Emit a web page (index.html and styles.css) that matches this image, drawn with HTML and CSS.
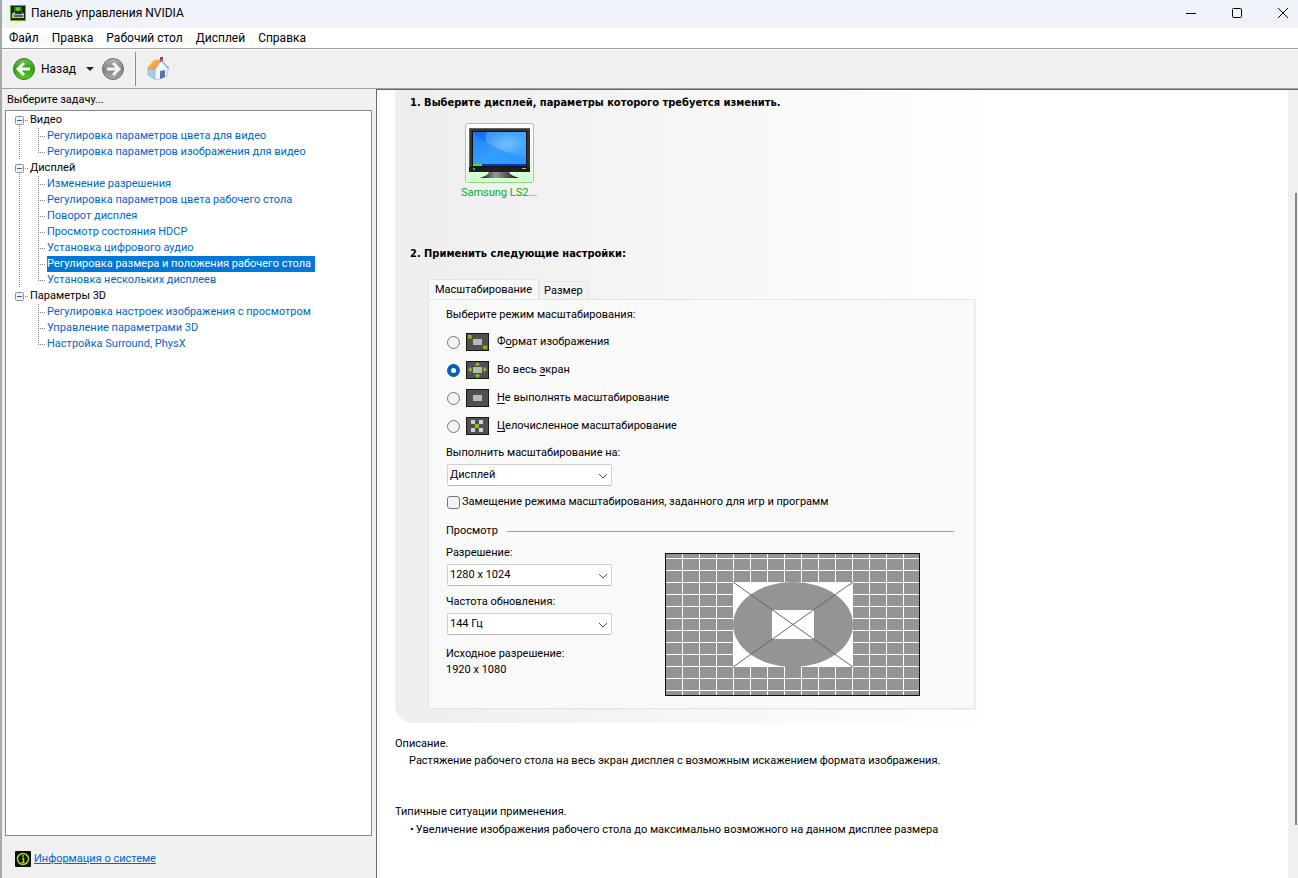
FILE: index.html
```html
<!DOCTYPE html>
<html lang="ru">
<head>
    <meta charset="UTF-8">
    <title>Панель управления NVIDIA</title>
    <link rel="stylesheet" href="styles.css">
</head>
<body>
    <header class="titlebar">
        <svg class="app-icon" width="16" height="16" viewBox="0 0 16 16">
            <rect x="0.5" y="0.5" width="15" height="15" fill="#1b2416" stroke="#6fae10"/>
            <rect x="4" y="2" width="8" height="4" fill="#2a8a0c"/>
            <circle cx="8" cy="4" r="2" fill="#5be01a"/>
            <path d="M2 13V9l2-2h8l2 2v4z" fill="#b9bdb9"/>
            <path d="M5 7h7v2H5z" fill="#2b332b"/>
            <path d="M4 10h9v2H4z" fill="#59605a"/>
        </svg>
        <h1>Панель управления NVIDIA</h1>
        <div class="window-buttons">
            <button type="button" aria-label="Свернуть"><svg width="12" height="12"><path d="M1 6.5h10" stroke="#000"/></svg></button>
            <button type="button" aria-label="Развернуть"><svg width="12" height="12"><rect x="1.5" y="1.5" width="9" height="9" rx="1" fill="none" stroke="#000"/></svg></button>
            <button type="button" aria-label="Закрыть"><svg width="12" height="12"><path d="M1 1l10 10M11 1L1 11" stroke="#000"/></svg></button>
        </div>
    </header>

    <nav class="menubar">
        <button type="button">Файл</button>
        <button type="button">Правка</button>
        <button type="button">Рабочий стол</button>
        <button type="button">Дисплей</button>
        <button type="button">Справка</button>
    </nav>

    <div class="toolbar">
        <button type="button" class="btn-back">
            <svg width="24" height="24" viewBox="0 0 24 24">
                <defs>
                    <linearGradient id="green" x1="0" y1="0" x2="0" y2="1">
                        <stop offset="0" stop-color="#6fc04e"/>
                        <stop offset="0.5" stop-color="#2fa414"/>
                        <stop offset="1" stop-color="#5ecb2c"/>
                    </linearGradient>
                </defs>
                <circle cx="12" cy="12" r="10.500" fill="url(#green)" stroke="#2c7d1b"/>
                <path d="M12 6l-6 6 6 6M6.5 12H18" fill="none" stroke="#fff" stroke-width="3"/>
            </svg>
            <span>Назад</span>
        </button>
        <button type="button" class="btn-history" aria-label="Журнал"><svg width="8" height="4"><path d="M0 0h8L4 4z" fill="#222"/></svg></button>
        <button type="button" aria-label="Вперёд">
            <svg width="24" height="24" viewBox="0 0 24 24">
                <defs>
                    <linearGradient id="gray" x1="0" y1="0" x2="0" y2="1">
                        <stop offset="0" stop-color="#b4b4b4"/>
                        <stop offset="0.5" stop-color="#858585"/>
                        <stop offset="1" stop-color="#a9a9a9"/>
                    </linearGradient>
                </defs>
                <circle cx="12" cy="12" r="10.500" fill="url(#gray)" stroke="#6c6c6c"/>
                <path d="M12 6l6 6-6 6M17.5 12H6" fill="none" stroke="#f4f4f4" stroke-width="3"/>
            </svg>
        </button>
        <span class="separator"></span>
        <button type="button" aria-label="Домой">
            <svg width="24" height="24" viewBox="0 0 24 24">
                <defs>
                    <linearGradient id="roof" x1="0" y1="0" x2="1" y2="1">
                        <stop offset="0" stop-color="#ffc56b"/>
                        <stop offset="1" stop-color="#f08a20"/>
                    </linearGradient>
                </defs>
                <path d="M2 11l8 2v10l-8-5z" fill="#a6caf2" stroke="#7ba5dc" stroke-width="0.7"/>
                <path d="M9 12l6-9 7 9-1 7-11 4-1-1z" fill="#f1f7fe" stroke="#8fb3e2" stroke-width="0.7"/>
                <path d="M14 14l5-1v7l-5 2z" fill="#5675a8"/>
                <path d="M1 11l7-8 8-1-7 11z" fill="url(#roof)"/>
                <path d="M14 0h3v5h-3z" fill="#b5332a"/>
                <path d="M15 3l8 9" stroke="#8db6e8" stroke-width="1.500"/>
            </svg>
        </button>
    </div>

    <div class="workspace">
        <aside class="sidebar">
            <h2>Выберите задачу...</h2>
            <div class="tree">
                <ul class="groups">
                    <li>
                        <button type="button" class="group"><svg width="9" height="9"><rect x="0.5" y="0.5" width="8" height="8" rx="1" fill="#f2f2f2" stroke="#8e8f8f"/><path d="M2 4.5h5" stroke="#3c5a9a"/></svg>Видео</button>
                        <ul class="tasks">
                            <li><a href="#">Регулировка параметров цвета для видео</a></li>
                            <li><a href="#">Регулировка параметров изображения для видео</a></li>
                        </ul>
                    </li>
                    <li>
                        <button type="button" class="group"><svg width="9" height="9"><rect x="0.5" y="0.5" width="8" height="8" rx="1" fill="#f2f2f2" stroke="#8e8f8f"/><path d="M2 4.5h5" stroke="#3c5a9a"/></svg>Дисплей</button>
                        <ul class="tasks">
                            <li><a href="#">Изменение разрешения</a></li>
                            <li><a href="#">Регулировка параметров цвета рабочего стола</a></li>
                            <li><a href="#">Поворот дисплея</a></li>
                            <li><a href="#">Просмотр состояния HDCP</a></li>
                            <li><a href="#">Установка цифрового аудио</a></li>
                            <li><a href="#" class="selected">Регулировка размера и положения рабочего стола</a></li>
                            <li><a href="#">Установка нескольких дисплеев</a></li>
                        </ul>
                    </li>
                    <li>
                        <button type="button" class="group"><svg width="9" height="9"><rect x="0.5" y="0.5" width="8" height="8" rx="1" fill="#f2f2f2" stroke="#8e8f8f"/><path d="M2 4.5h5" stroke="#3c5a9a"/></svg>Параметры 3D</button>
                        <ul class="tasks">
                            <li><a href="#">Регулировка настроек изображения с просмотром</a></li>
                            <li><a href="#">Управление параметрами 3D</a></li>
                            <li><a href="#">Настройка Surround, PhysX</a></li>
                        </ul>
                    </li>
                </ul>
            </div>
            <footer class="system-info">
                <svg width="16" height="16" viewBox="0 0 16 16">
                    <rect width="16" height="16" rx="1" fill="#0c0f0a"/>
                    <circle cx="8" cy="8" r="5.500" fill="none" stroke="#a4d72f" stroke-width="1.500"/>
                    <path d="M8 4v2M7 7.500h1.500V11M6.500 11.500h3" fill="none" stroke="#a4d72f" stroke-width="1.500"/>
                </svg>
                <a href="#">Информация о системе</a>
            </footer>
        </aside>

        <main class="content">
            <div class="page">
                <section class="settings">
                    <h3>1. Выберите дисплей, параметры которого требуется изменить.</h3>
                    <button type="button" class="display">
                        <span class="display-frame">
                            <svg width="61" height="50" viewBox="0 0 61 50">
                                <defs>
                                    <linearGradient id="screen" x1="0" y1="0" x2="1" y2="1">
                                        <stop offset="0" stop-color="#1262f0"/>
                                        <stop offset="0.5" stop-color="#3ba0fb"/>
                                        <stop offset="1" stop-color="#2492f6"/>
                                    </linearGradient>
                                    <radialGradient id="glow">
                                        <stop offset="0" stop-color="#8ccbff"/>
                                        <stop offset="1" stop-color="#4aa9ff"/>
                                    </radialGradient>
                                    <linearGradient id="stand">
                                        <stop offset="0" stop-color="#111"/>
                                        <stop offset="0.4" stop-color="#999"/>
                                        <stop offset="1" stop-color="#111"/>
                                    </linearGradient>
                                </defs>
                                <rect width="61" height="44" fill="#333"/>
                                <path d="M0.500 44V0.500H61" fill="none" stroke="#666"/>
                                <rect x="3" y="3" width="55" height="36" fill="#111"/>
                                <rect x="4" y="4" width="53" height="34" fill="url(#screen)"/>
                                <path d="M18 4h39v24C41 26 28 22 17 14c0-4 0-7 1-10z" fill="url(#glow)" opacity="0.700"/>
                                <path d="M4 4c12 14 32 22 53 24v8H4z" fill="#2d9bff" opacity="0.500"/>
                                <rect x="4" y="36" width="53" height="2" fill="#1330c4"/>
                                <rect x="4" y="36" width="9" height="2" fill="#62d52b"/>
                                <rect x="0" y="39" width="61" height="5" fill="#1e1e1e"/>
                                <rect x="4" y="40" width="2" height="2" fill="#25b62c"/>
                                <rect x="53" y="40" width="4" height="1" fill="#aaa"/>
                                <path d="M20 44h20c1 3 5 4 10 6H11c5-2 8-3 9-6z" fill="url(#stand)"/>
                            </svg>
                        </span>
                        <span class="display-name">Samsung LS2...</span>
                    </button>

                    <h3>2. Применить следующие настройки:</h3>
                    <div class="tabs" role="tablist">
                        <button type="button" class="tab active" role="tab" aria-selected="true">Масштабирование</button>
                        <button type="button" class="tab" role="tab" aria-selected="false">Размер</button>
                    </div>
                    <div class="tab-panel" role="tabpanel">
                        <fieldset class="modes">
                            <legend>Выберите режим масштабирования:</legend>
                            <label class="mode">
                                <input type="radio" name="mode">
                                <svg width="23" height="18" viewBox="0 0 23 18">
                                    <rect x="0.5" y="0.5" width="22" height="17" fill="#505050" stroke="#161616"/>
                                    <rect x="7" y="6" width="9" height="6" fill="#b8b8b8"/>
                                    <path d="M2 2h4L5 3l1 1v2L4 5 2 6zM21 16h-4l1-1-1-1v-2l2 1 2-1z" fill="#7cc800"/>
                                </svg>
                                <span>Ф<u>о</u>рмат изображения</span>
                            </label>
                            <label class="mode">
                                <input type="radio" name="mode" checked>
                                <svg width="23" height="18" viewBox="0 0 23 18">
                                    <rect x="0.5" y="0.5" width="22" height="17" fill="#505050" stroke="#161616"/>
                                    <rect x="7" y="6" width="9" height="6" fill="#b8b8b8"/>
                                    <path d="M11.500 1l3 3h-2v1h-2V4h-2zM11.500 17l3-3h-2v-1h-2v1h-2zM2 8.500l3-3v2h1v2H5v2zM21 8.500l-3-3v2h-1v2h1v2z" fill="#7cc800"/>
                                </svg>
                                <span>Во весь <u>э</u>кран</span>
                            </label>
                            <label class="mode">
                                <input type="radio" name="mode">
                                <svg width="23" height="18" viewBox="0 0 23 18">
                                    <rect x="0.5" y="0.5" width="22" height="17" fill="#505050" stroke="#161616"/>
                                    <rect x="7" y="6" width="9" height="6" fill="#b8b8b8"/>
                                </svg>
                                <span><u>Н</u>е выполнять масштабирование</span>
                            </label>
                            <label class="mode">
                                <input type="radio" name="mode">
                                <svg width="23" height="18" viewBox="0 0 23 18">
                                    <rect x="0.5" y="0.5" width="22" height="17" fill="#505050" stroke="#161616"/>
                                    <path d="M5 3h4v4H5zM13 3h4v4h-4zM5 11h4v4H5zM13 11h4v4h-4z" fill="#d0d0d0"/>
                                    <rect x="9" y="7" width="4" height="4" fill="#7cc800"/>
                                </svg>
                                <span><u>Ц</u>елочисленное масштабирование</span>
                            </label>
                        </fieldset>

                        <div class="field">
                            <label for="scaleOn">Выполнить масштабирование на:</label>
                            <div class="select">
                                <select id="scaleOn"><option>Дисплей</option><option>ГП</option></select>
                                <svg width="10" height="6"><path d="M1 1l4 4 4-4" fill="none" stroke="#555"/></svg>
                            </div>
                        </div>
                        <label class="override"><input type="checkbox"><span>Замещение режима масштабирования, заданного для игр и программ</span></label>

                        <h4 class="preview-title">Просмотр</h4>
                        <div class="preview">
                            <div class="preview-options">
                                <div class="field">
                                    <label for="resolution">Разрешение:</label>
                                    <div class="select">
                                        <select id="resolution"><option>1280 x 1024</option><option>1920 x 1080</option></select>
                                        <svg width="10" height="6"><path d="M1 1l4 4 4-4" fill="none" stroke="#555"/></svg>
                                    </div>
                                </div>
                                <div class="field">
                                    <label for="refresh">Частота обновления:</label>
                                    <div class="select">
                                        <select id="refresh"><option>144 Гц</option><option>60 Гц</option></select>
                                        <svg width="10" height="6"><path d="M1 1l4 4 4-4" fill="none" stroke="#555"/></svg>
                                    </div>
                                </div>
                                <p class="native">Исходное разрешение:<br>1920 x 1080</p>
                            </div>
                            <svg class="pattern" width="255" height="143" viewBox="0 0 255 143">
                                <defs>
                                    <pattern id="grid" width="17" height="12" y="5" patternUnits="userSpaceOnUse">
                                        <rect width="17" height="12" fill="#949494"/>
                                        <path d="M0 0h17v1H1v11H0z" fill="#fff"/>
                                    </pattern>
                                </defs>
                                <rect width="255" height="143" fill="url(#grid)"/>
                                <rect x="68" y="29" width="120" height="85" fill="#fff"/>
                                <path d="M120 113h16v4h-16z" fill="#949494"/>
                                <ellipse cx="128" cy="71.500" rx="60" ry="42.500" fill="#949494"/>
                                <rect x="107" y="57" width="42" height="29" fill="#fff"/>
                                <path d="M68 29l120 85M188 29L68 114" stroke="#666"/>
                                <rect x="0.5" y="0.5" width="254" height="142" fill="none" stroke="#111"/>
                            </svg>
                        </div>
                    </div>
                </section>

                <section class="note">
                    <h4>Описание.</h4>
                    <p>Растяжение рабочего стола на весь экран дисплея с возможным искажением формата изображения.</p>
                </section>
                <section class="note">
                    <h4>Типичные ситуации применения.</h4>
                    <ul>
                        <li>Увеличение изображения рабочего стола до максимально возможного на данном дисплее размера</li>
                    </ul>
                </section>
            </div>
            <div class="scrollbar"><div class="thumb"></div></div>
        </main>
    </div>
</body>
</html>
```
FILE: styles.css
```css
* { box-sizing: border-box; }
body { display: flex; flex-direction: column; height: 100vh; margin: 0; overflow: hidden; border-left: 2px solid #a8a8a8; background: #f0f0f0; color: #000; font: 11px/16px Tahoma, Roboto, sans-serif; }
h1, h2, h3, h4, p, ul { margin: 0; padding: 0; font-size: 11px; font-weight: normal; }
ul { list-style: none; }
svg { display: block; flex: none; }
button { display: flex; align-items: center; padding: 0; border: none; background: none; color: inherit; font: inherit; }
select, input { margin: 0; font: inherit; }
a { color: #0066cc; text-decoration: none; }

/* window header */
.titlebar { display: flex; align-items: center; gap: 5px; height: 28px; padding: 0 0 3px 8px; background: #f0f3f9; flex: none; }
.titlebar h1 { flex: 1; font: 12px/16px "Segoe UI", Roboto, sans-serif; }
.window-buttons { display: flex; gap: 16px; }
.window-buttons button { justify-content: center; width: 30px; height: 24px; }
.menubar { display: flex; gap: 13px; height: 20px; padding: 0 7px; background: #fff; font: 12px/20px "Segoe UI", Roboto, sans-serif; flex: none; }
.toolbar { display: flex; align-items: center; height: 41px; padding: 0 10px; border-top: 1px solid #a0a0a0; border-bottom: 1px solid #a0a0a0; box-shadow: inset 0 1px #fff; flex: none; }
.btn-back { gap: 5px; font: 12px/16px "Segoe UI", Roboto, sans-serif; }
.btn-history { padding: 0 7px 0 10px; }
.separator { width: 1px; height: 34px; margin: 0 10px; background: #8c8c8c; }

.workspace { display: flex; flex: 1; min-height: 0; }

/* task tree */
.sidebar { display: flex; flex-direction: column; width: 374px; padding: 1px 4px 0 3px; flex: none; }
.sidebar h2 { padding: 0 2px 1px; line-height: 19px; }
.tree { flex: 1; padding: 1px 9px; border: 1px solid #828790; background: #fff; }
.groups > li { background: repeating-linear-gradient(#808080 0 1px, transparent 1px 2px) 4px 8px / 1px 100% no-repeat; }
.groups > li:last-child { background: none; }
.group { gap: 6px; height: 16px; background: repeating-linear-gradient(90deg, #808080 0 1px, transparent 1px 2px) 10px 8px / 4px 1px no-repeat; }
.tasks { padding-left: 23px; }
.tasks li { height: 16px; padding-left: 9px; background: repeating-linear-gradient(#808080 0 1px, transparent 1px 2px) 0 0 / 1px 100% no-repeat, repeating-linear-gradient(90deg, #808080 0 1px, transparent 1px 2px) 0 8px / 8px 1px no-repeat; }
.tasks li:last-child { background-size: 1px 8px, 8px 1px; }
.tasks a { display: inline-block; padding-right: 4px; line-height: 16px; }
.tasks a.selected { background: #0078d7; color: #fff; }
.system-info { display: flex; align-items: center; gap: 3px; height: 42px; padding: 4px 10px 0; flex: none; }
.system-info a { text-decoration: underline; }

/* right pane */
.content { display: flex; flex: 1; min-width: 0; border-top: 1px solid #696969; border-left: 1px solid #696969; background: #fff; }
.page { flex: 1; padding: 0 16px 0 18px; overflow: hidden; }
.scrollbar { display: flex; justify-content: flex-end; width: 10px; padding: 103px 1px 53px; background: #f0f0f0; }
.thumb { width: 2px; background: #868686; }
.settings { max-width: 610px; padding: 5px 30px 14px 15px; border-bottom-left-radius: 18px; background: linear-gradient(90deg, #eee, #fff); }
.settings h3 { font: bold 11px/16px Tahoma, "DejaVu Sans Condensed", sans-serif; }
.display { flex-direction: column; gap: 2px; width: 76px; margin: 12px 0 45px 51px; }
.display-frame { padding: 4px 3px; border: 1px solid #90d87c; border-radius: 3px; background: linear-gradient(#fff, #ccffcc); box-shadow: inset 0 0 0 1px #fff; }
.display-name { color: #00b020; white-space: nowrap; }
.tabs { display: flex; align-items: flex-end; margin: 17px 0 0 18px; }
.tab { height: 18px; padding: 0 4px; border: 1px solid #e5e5e5; border-bottom: none; background: #f3f3f3; }
.tab.active { height: 20px; padding: 0 6px; background: #f9f9f9; }
.tab-panel { max-width: 547px; margin-left: 18px; padding: 7px 20px 12px 17px; border: 1px solid #e5e5e5; background: #f9f9f9; box-shadow: 1px 1px #f2f2f2; }
.modes { margin: 0; padding: 0; border: none; }
.modes legend { padding: 0 0 5px; }
.mode { display: flex; align-items: center; height: 28px; }
.mode svg { margin: 0 8px 0 6px; }
.mode u { text-underline-offset: 2px; }
input[type="radio"], input[type="checkbox"] { appearance: none; width: 13px; height: 13px; margin-left: 1px; border: 1px solid #777; background: #f3f3f3; flex: none; }
input[type="radio"] { border-radius: 50%; }
input[type="radio"]:checked { border: 4px solid #005fb8; background: #fff; }
input[type="checkbox"] { border-radius: 3px; }
.field { display: flex; flex-direction: column; gap: 3px; }
.modes + .field { margin-top: 5px; }
.select { position: relative; width: 165px; margin-left: 1px; }
.select select { appearance: none; display: block; width: 100%; height: 22px; padding: 0 2px; border: 1px solid #d0d0d0; border-bottom-color: #b8b8b8; border-radius: 2px; background: #fff; color: #000; }
.select svg { position: absolute; top: 9px; right: 4px; pointer-events: none; }
.override { display: flex; align-items: center; gap: 2px; margin-top: 8px; }
.preview-title { display: flex; align-items: center; gap: 9px; margin: 13px 0 6px; }
.preview-title::after { content: ""; flex: 1; height: 1px; background: #a0a0a0; }
.preview { display: flex; gap: 53px; }
.preview-options { display: flex; flex-direction: column; gap: 8px; }
.native { padding-top: 3px; }
.pattern { margin-top: 8px; }
.note { padding-top: 13px; }
.note p { padding: 1px 14px 0; }
.note ul { padding: 2px 15px; }
.note li::before { content: "•"; margin-right: 2px; }
.note + .note { padding-top: 35px; }
```
